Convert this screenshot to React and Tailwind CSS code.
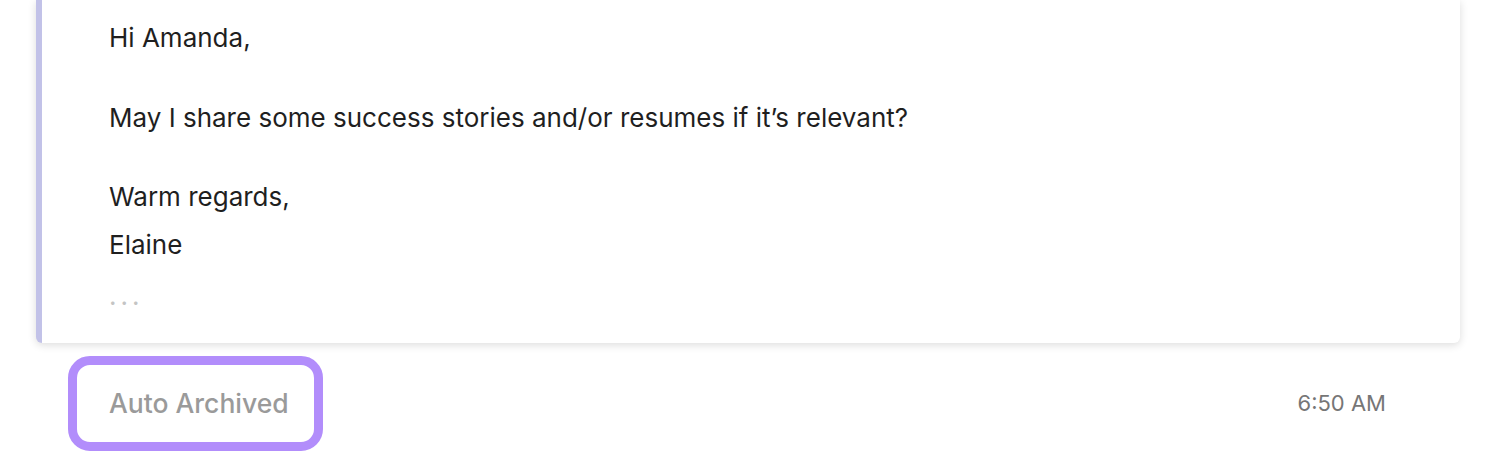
export default function App() {
  return (
    <div className="min-h-[476px] w-[1504px] bg-white font-['Inter',sans-serif]">
      <div className="ml-9 mr-11 rounded-b-md border-l-[6px] border-[#c2c2e8] bg-white pb-[26px] pl-[67px] pt-[14px] text-[26px] leading-[48px] text-[#1f1f1f] shadow-[0_2px_8px_rgba(0,0,0,0.14)]">
        <p>Hi Amanda,</p>
        <p className="mt-8">May I share some success stories and/or resumes if it’s relevant?</p>
        <p className="mt-[31px]">Warm regards,</p>
        <p>Elaine</p>
        <p className="pt-[6px] leading-[42px] tracking-[4px] text-[#c4c4c4]">...</p>
      </div>
      <div className="ml-[68px] mr-[118px] mt-[13px] flex items-center justify-between">
        <div className="flex h-[95px] items-center rounded-[22px] border-[9px] border-[#b28dfb] pl-[32px] pr-[25px]">
          <span className="text-[26.5px] font-medium text-[#9a9a9a]">Auto Archived</span>
        </div>
        <span className="text-[22px] text-[#767676]">6:50 AM</span>
      </div>
    </div>
  );
}
